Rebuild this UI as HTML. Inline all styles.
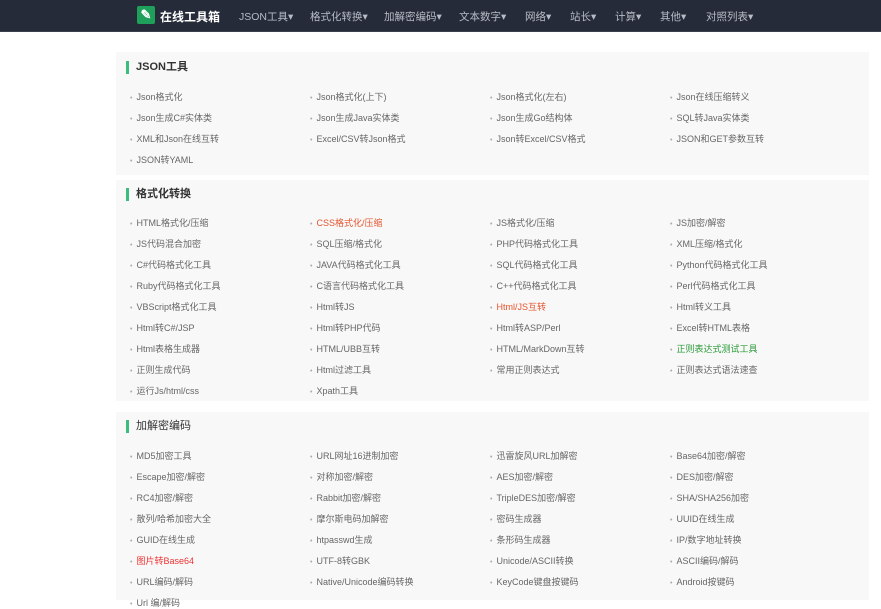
<!DOCTYPE html><html><head><meta charset="utf-8"><style>
body{margin:0;width:881px;height:600px;overflow:hidden;background:#fff;font-family:"Liberation Sans","Noto Sans CJK SC",sans-serif;position:relative}
.hd{position:absolute;left:0;top:0;width:881px;height:31px;background:#262b3a;border-bottom:1px solid #3a4050}
.logo{position:absolute;left:137px;top:6px;width:18px;height:18px;background:#1fa05a;border-radius:2px;color:#fff;font-size:13px;line-height:18px;text-align:center;font-weight:bold}
.brand{position:absolute;left:160px;top:8px;color:#fff;font-size:12px;font-weight:bold}
.nav{position:absolute;top:9px;color:#b8bcc6;font-size:10.5px;white-space:nowrap}
.p{position:absolute;left:116px;width:753px;background:#f8f8f8}
.t{position:absolute;left:126px;font-size:11px;font-weight:bold;color:#333;border-left:3px solid #3dbd7d;padding-left:7px;line-height:13px}
.i{position:absolute;font-size:9px;color:#666;white-space:nowrap}
.i:before{content:"•";color:#aaa;margin-right:4px;font-size:7px}
.r{color:#e5552f}.g{color:#2a9a38}.rd{color:#e33}
</style></head><body>
<div class="hd"></div><div class="logo">✎</div><div class="brand">在线工具箱</div>
<div class="nav" style="left:239px">JSON工具▾</div><div class="nav" style="left:310px">格式化转换▾</div><div class="nav" style="left:384px">加解密编码▾</div><div class="nav" style="left:459px">文本数字▾</div><div class="nav" style="left:525px">网络▾</div><div class="nav" style="left:570px">站长▾</div><div class="nav" style="left:615px">计算▾</div><div class="nav" style="left:660px">其他▾</div><div class="nav" style="left:706px">对照列表▾</div>
<div class="p" style="top:52px;height:123px"></div>
<div class="p" style="top:180px;height:221px"></div>
<div class="p" style="top:412px;height:188px"></div>
<div class="t" style="top:61px">JSON工具</div>
<div class="t" style="top:188px">格式化转换</div>
<div class="t" style="top:420px;font-weight:normal">加解密编码</div>
<div id="c"></div>
<script>
var d=[[90,["Json格式化","Json格式化(上下)","Json格式化(左右)","Json在线压缩转义","Json生成C#实体类","Json生成Java实体类","Json生成Go结构体","SQL转Java实体类","XML和Json在线互转","Excel/CSV转Json格式","Json转Excel/CSV格式","JSON和GET参数互转","JSON转YAML"]],
[216,["HTML格式化/压缩","r:CSS格式化/压缩","JS格式化/压缩","JS加密/解密","JS代码混合加密","SQL压缩/格式化","PHP代码格式化工具","XML压缩/格式化","C#代码格式化工具","JAVA代码格式化工具","SQL代码格式化工具","Python代码格式化工具","Ruby代码格式化工具","C语言代码格式化工具","C++代码格式化工具","Perl代码格式化工具","VBScript格式化工具","Html转JS","r:Html/JS互转","Html转义工具","Html转C#/JSP","Html转PHP代码","Html转ASP/Perl","Excel转HTML表格","Html表格生成器","HTML/UBB互转","HTML/MarkDown互转","g:正则表达式测试工具","正则生成代码","Html过滤工具","常用正则表达式","正则表达式语法速查","运行Js/html/css","Xpath工具"]],
[449,["MD5加密工具","URL网址16进制加密","迅雷旋风URL加解密","Base64加密/解密","Escape加密/解密","对称加密/解密","AES加密/解密","DES加密/解密","RC4加密/解密","Rabbit加密/解密","TripleDES加密/解密","SHA/SHA256加密","散列/哈希加密大全","摩尔斯电码加解密","密码生成器","UUID在线生成","GUID在线生成","htpasswd生成","条形码生成器","IP/数字地址转换","rd:图片转Base64","UTF-8转GBK","Unicode/ASCII转换","ASCII编码/解码","URL编码/解码","Native/Unicode编码转换","KeyCode键盘按键码","Android按键码","Url 编/解码"]]];
var h="";d.forEach(function(s){s[1].forEach(function(t,k){var c="";var m=t.match(/^(r|g|rd):(.*)$/);if(m){c=m[1];t=m[2];}h+='<div class="i '+c+'" style="left:'+(130+180*(k%4))+'px;top:'+(s[0]+21*Math.floor(k/4))+'px">'+t+'</div>';});});
document.getElementById("c").innerHTML=h;
</script>
</body></html>
